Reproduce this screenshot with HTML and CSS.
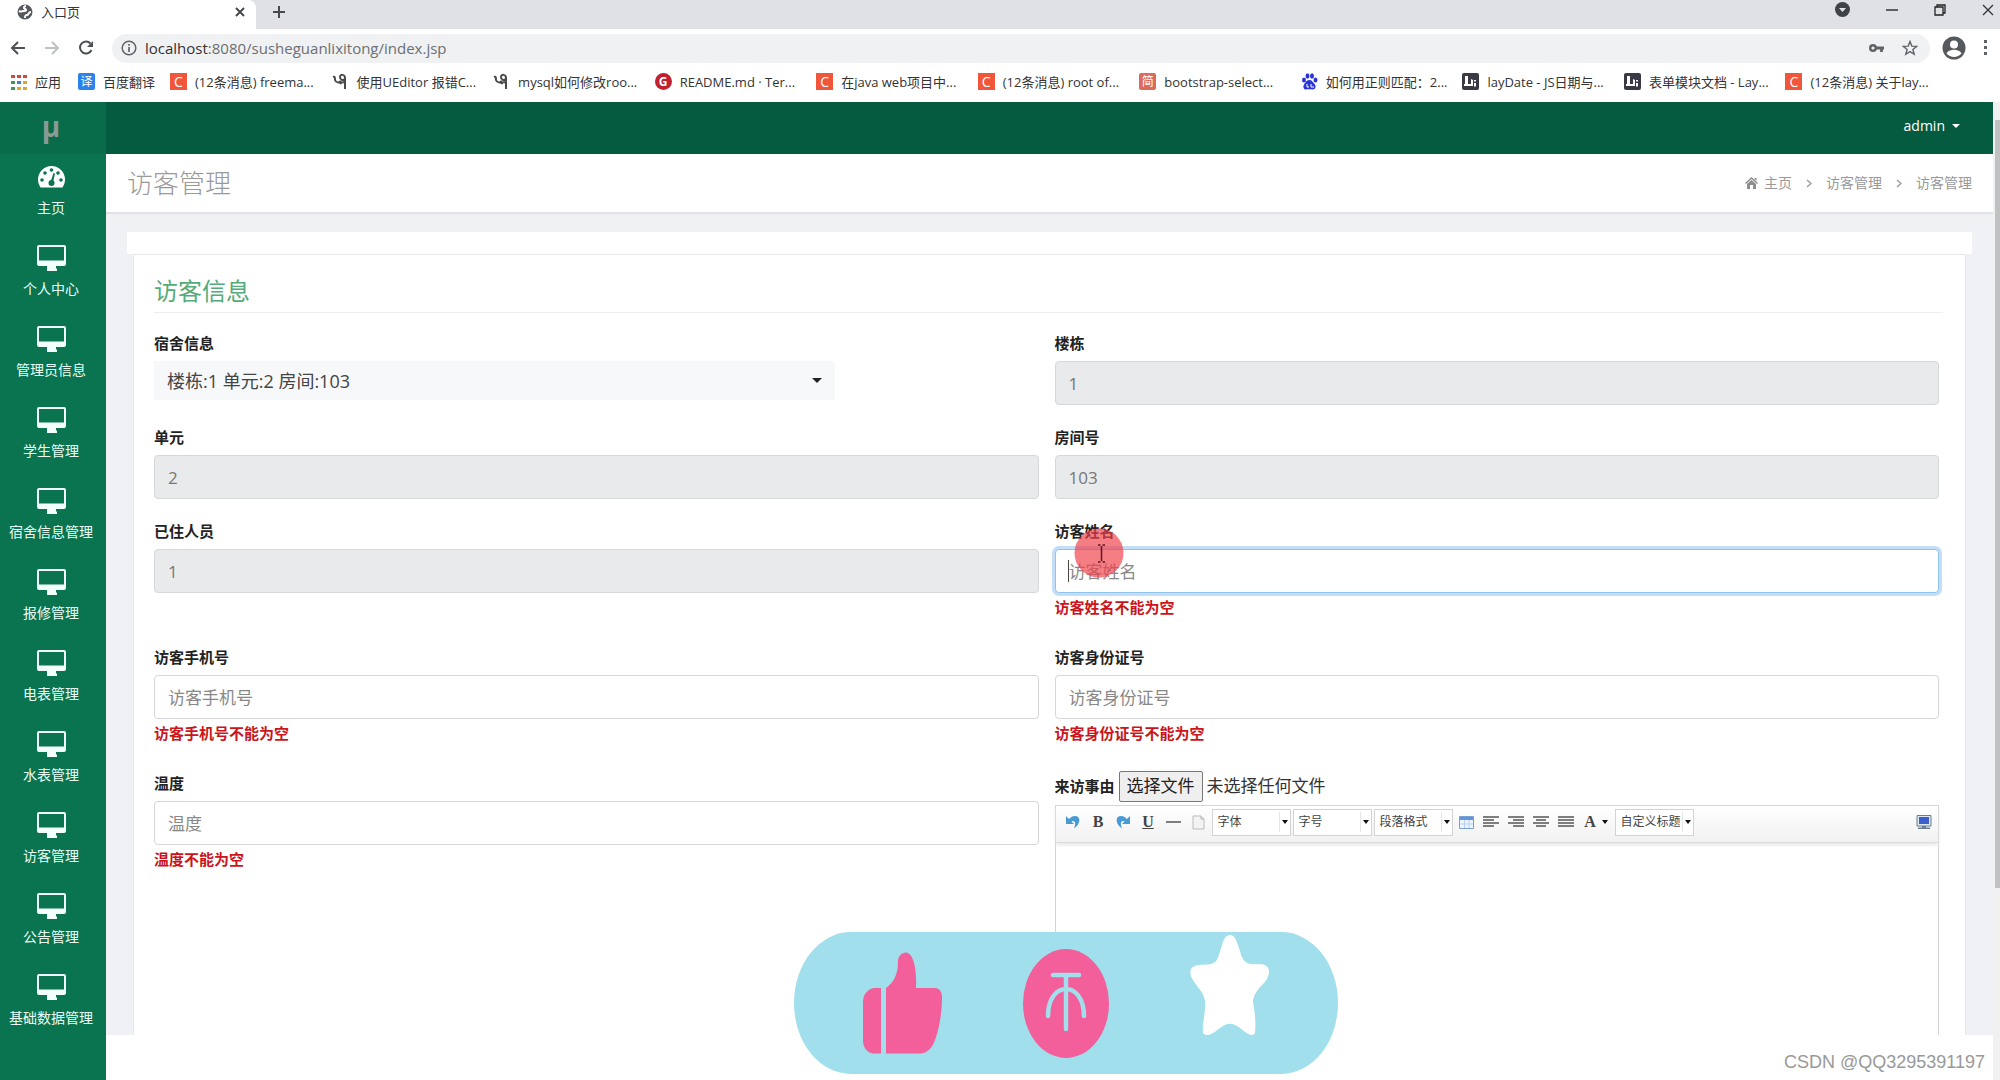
FILE: index.html
```html
<!DOCTYPE html>
<html lang="zh-CN">
<head>
<meta charset="utf-8">
<meta name="viewport" content="width=device-width, initial-scale=1">
<title>入口页</title>
<link rel="stylesheet" href="styles.css">
</head>
<body>
<svg class="sprite" aria-hidden="true">
  <symbol id="monitor" viewBox="0 0 29 26"><path fill-rule="evenodd" d="M2 0h25a2 2 0 0 1 2 2v17a2 2 0 0 1-2 2h-8v2.500h1V26H10v-2.500h0V21H2a2 2 0 0 1-2-2V2a2 2 0 0 1 2-2zM2 2v13.500h25V2z"/></symbol>
  <symbol id="lay" viewBox="0 0 17 17"><rect width="17" height="17" rx="2" fill="#3a3a46"/><path d="M3 3h3v8h3v-5l2 1v6H2v-2h1z" fill="#fff"/><path d="M12 7h2v1.500h-2zM12 10h2v3.500h-2z" fill="#fff"/></symbol>
  <symbol id="script" viewBox="0 0 17 17"><path d="M1 4c2-1 2 1 2 3 1 3 4 3 6 1M13 16V5c0-4-5-4-5-1s3 4 5 2M8 11c1-2 3-2 5-2" fill="none" stroke="#4a4a4a" stroke-width="2"/></symbol>
</svg>

<div class="chrome">
  <div class="tabstrip">
    <div class="tab">
      <svg width="16" height="16" viewBox="0 0 16 16"><circle cx="8" cy="8" r="7.500" fill="#55595d"/><path d="M9 2c-2 0-3 2-1 3s1 2-1 2-3 1-5 0M8 14c0-2 0-3 2-3s1-3 4-3" fill="none" stroke="#fff" stroke-width="2"/></svg>
      <span>入口页</span>
      <button class="plain tab-close" aria-label="关闭"><svg width="10" height="10" viewBox="0 0 10 10"><path d="M1 1l8 8M9 1l-8 8" stroke="#45484c" stroke-width="2"/></svg></button>
    </div>
    <button class="plain new-tab" aria-label="新标签页"><svg width="14" height="14" viewBox="0 0 14 14"><path d="M7 1v12M1 7h12" stroke="#45484c" stroke-width="2"/></svg></button>
    <div class="window-controls">
      <svg width="15" height="15" viewBox="0 0 15 15"><circle cx="7.500" cy="7.500" r="7.500" fill="#3f4246"/><path d="M4 6h7l-3.500 4z" fill="#e4e6e9"/></svg>
      <svg width="12" height="12" viewBox="0 0 12 12"><path d="M0 6h12" stroke="#333" stroke-width="1.500"/></svg>
      <svg width="12" height="12" viewBox="0 0 12 12"><path d="M1 3h8v8H1zM3 3V1h8v8H9" fill="none" stroke="#222" stroke-width="1.300"/></svg>
      <svg width="12" height="12" viewBox="0 0 12 12"><path d="M1 1l10 10M11 1L1 11" stroke="#333" stroke-width="1.300"/></svg>
    </div>
  </div>
  <div class="toolbar">
    <svg width="16" height="14" viewBox="0 0 16 14"><path d="M15 7H2M8 1L2 7l6 6" fill="none" stroke="#4d5155" stroke-width="2"/></svg>
    <svg width="16" height="14" viewBox="0 0 16 14"><path d="M1 7h13M8 1l6 6-6 6" fill="none" stroke="#bdc0c4" stroke-width="2"/></svg>
    <svg width="16" height="16" viewBox="0 0 16 16"><path d="M13.500 10a6 6 0 1 1-1-6.500" fill="none" stroke="#4d5155" stroke-width="2"/><path d="M15 1v6H9z" fill="#4d5155"/></svg>
    <div class="address">
      <svg width="16" height="16" viewBox="0 0 16 16"><circle cx="8" cy="8" r="6.800" fill="none" stroke="#5f6368" stroke-width="1.500"/><path d="M8 7v5M8 4v1.700" stroke="#5f6368" stroke-width="1.700"/></svg>
      <span class="url"><b>localhost</b>:8080/susheguanlixitong/index.jsp</span>
      <svg width="15" height="10" viewBox="0 0 15 10"><circle cx="4" cy="5" r="2.800" fill="none" stroke="#5f6368" stroke-width="2.400"/><path d="M7 5h8M12.500 5v4" stroke="#5f6368" stroke-width="2.800"/></svg>
      <svg width="16" height="16" viewBox="0 0 16 16"><path d="M8 1.500l1.800 4.600 4.900.3-3.800 3.100 1.300 4.800L8 11.600l-4.200 2.700 1.300-4.800-3.800-3.100 4.900-.3z" fill="none" stroke="#5f6368" stroke-width="1.400"/></svg>
    </div>
    <svg width="24" height="24" viewBox="0 0 24 24"><circle cx="12" cy="12" r="11.500" fill="#55595d"/><circle cx="12" cy="8.500" r="4" fill="#fff"/><path d="M4.500 17.500c2-5 13-5 15 0-4 4.500-11 4.500-15 0z" fill="#fff"/></svg>
    <svg width="4" height="16" viewBox="0 0 4 16"><path d="M0 0h3v3H0zM0 6h3v3H0zM0 12h3v3H0z" fill="#5f6368"/></svg>
  </div>
  <nav class="bookmarks">
    <a class="apps" href="#"><svg width="16" height="16" viewBox="0 0 16 16"><path d="M0 1h4v3H0zM6 1h4v3H6zM12 1h4v3h-4z" fill="#d8453e"/><path d="M0 7h4v3H0z" fill="#3c9a55"/><path d="M6 7h4v3H6z" fill="#3f7fd8"/><path d="M12 7h4v3h-4zM12 13h4v3h-4zM6 13h4v3H6z" fill="#dfa62c"/><path d="M0 13h4v3H0z" fill="#3c9a55"/></svg>应用</a>
    <a class="translate" href="#"><i class="fav fav-blue">译</i>百度翻译</a>
    <a href="#"><i class="fav fav-c">C</i>(12条消息) freema...</a>
    <a href="#"><svg width="17" height="17"><use href="#script"/></svg>使用UEditor 报错C...</a>
    <a href="#"><svg width="17" height="17"><use href="#script"/></svg>mysql如何修改roo...</a>
    <a href="#"><i class="fav fav-g">G</i>README.md · Ter...</a>
    <a href="#"><i class="fav fav-c">C</i>在java web项目中...</a>
    <a href="#"><i class="fav fav-c">C</i>(12条消息) root of...</a>
    <a href="#"><i class="fav fav-j">简</i>bootstrap-select...</a>
    <a href="#"><svg width="17" height="17" viewBox="0 0 17 17"><g fill="#2c36d6"><ellipse cx="3" cy="7" rx="2" ry="2.600"/><ellipse cx="6.500" cy="3" rx="2" ry="2.700"/><ellipse cx="11" cy="3" rx="2" ry="2.700"/><ellipse cx="14.500" cy="7" rx="2" ry="2.600"/><path d="M8.500 7c2.500 0 3 2 5 4s1 5.500-1.500 5.500-5-.5-7 0S1.500 14 3 11.500 6 7 8.500 7z"/></g><path d="M6 11v3h2M10 11v3h3" stroke="#fff" fill="none"/></svg>如何用正则匹配：2...</a>
    <a href="#"><svg width="17" height="17"><use href="#lay"/></svg>layDate - JS日期与...</a>
    <a href="#"><svg width="17" height="17"><use href="#lay"/></svg>表单模块文档 - Lay...</a>
    <a href="#"><i class="fav fav-c">C</i>(12条消息) 关于lay...</a>
  </nav>
</div>

<div class="app">
  <aside class="sidebar">
    <div class="logo">μ</div>
    <nav class="menu">
      <a href="#"><svg width="27" height="26" viewBox="0 0 27 26"><path fill="#fff" d="M13.500 2A13.500 13.500 0 0 1 27 15.500c0 3-1 5.500-2.500 8h-22C1 21 0 18.500 0 15.500A13.500 13.500 0 0 1 13.500 2z"/><g fill="#0a7350"><circle cx="13.500" cy="6" r="1.800"/><circle cx="7" cy="9" r="1.800"/><circle cx="20" cy="9" r="1.800"/><circle cx="4" cy="16" r="1.800"/><circle cx="23" cy="16" r="1.800"/><circle cx="13.500" cy="19" r="3"/><path d="M12.500 18l3-9 1.500.5-2 9z"/></g></svg>主页</a>
      <a href="#"><svg width="29" height="26"><use href="#monitor"/></svg>个人中心</a>
      <a href="#"><svg width="29" height="26"><use href="#monitor"/></svg>管理员信息</a>
      <a href="#"><svg width="29" height="26"><use href="#monitor"/></svg>学生管理</a>
      <a href="#"><svg width="29" height="26"><use href="#monitor"/></svg>宿舍信息管理</a>
      <a href="#"><svg width="29" height="26"><use href="#monitor"/></svg>报修管理</a>
      <a href="#"><svg width="29" height="26"><use href="#monitor"/></svg>电表管理</a>
      <a href="#"><svg width="29" height="26"><use href="#monitor"/></svg>水表管理</a>
      <a href="#"><svg width="29" height="26"><use href="#monitor"/></svg>访客管理</a>
      <a href="#"><svg width="29" height="26"><use href="#monitor"/></svg>公告管理</a>
      <a href="#"><svg width="29" height="26"><use href="#monitor"/></svg>基础数据管理</a>
    </nav>
  </aside>

  <main class="main">
    <header class="topbar"><button class="plain user">admin<i class="caret"></i></button></header>
    <div class="page-head">
      <h1>访客管理</h1>
      <nav class="crumbs">
        <a href="#"><svg width="13" height="12" viewBox="0 0 13 12"><path d="M6.500 0L13 6l-1 1-5.500-5L1 7 0 6zM9.500 1h2v3l-2-2zM2 7l4.500-4L11 7v5H8V8H5v4H2z" fill="#8c8f8e"/></svg>主页</a>
        <svg width="6" height="9" viewBox="0 0 6 9"><path d="M1 1l4 3.500L1 8" fill="none" stroke="#999" stroke-width="1.300"/></svg>
        <a href="#">访客管理</a>
        <svg width="6" height="9" viewBox="0 0 6 9"><path d="M1 1l4 3.500L1 8" fill="none" stroke="#999" stroke-width="1.300"/></svg>
        <span>访客管理</span>
      </nav>
    </div>
    <div class="content">
      <div class="strip"></div>
      <form class="card">
        <h2>访客信息</h2>
        <div class="fields">
          <div class="field"><label for="room">宿舍信息</label>
            <div class="picker"><select id="room"><option>楼栋:1 单元:2 房间:103</option></select><i class="caret"></i></div></div>
          <div class="field"><label for="building">楼栋</label><input id="building" type="text" value="1" readonly></div>
          <div class="field"><label for="unit">单元</label><input id="unit" type="text" value="2" readonly></div>
          <div class="field"><label for="number">房间号</label><input id="number" type="text" value="103" readonly></div>
          <div class="field"><label for="people">已住人员</label><input id="people" type="text" value="1" readonly></div>
          <div class="field pointed"><label for="name">访客姓名</label><input id="name" class="focused" type="text" placeholder="访客姓名"><p class="error">访客姓名不能为空</p>
            <svg class="pointer" width="50" height="50" viewBox="0 0 50 50"><circle cx="25" cy="25" r="24.500" fill="#f0404a" fill-opacity=".68"/><path d="M24 17h2.500M28.500 17H31M27.500 18v15M24 34h2.500M28.500 34H31" stroke="#5b1a1e" stroke-width="1.500"/></svg></div>
          <div class="field"><label for="phone">访客手机号</label><input id="phone" type="text" placeholder="访客手机号"><p class="error">访客手机号不能为空</p></div>
          <div class="field"><label for="idcard">访客身份证号</label><input id="idcard" type="text" placeholder="访客身份证号"><p class="error">访客身份证号不能为空</p></div>
          <div class="field"><label for="temp">温度</label><input id="temp" type="text" placeholder="温度"><p class="error">温度不能为空</p></div>
          <div class="field reason">
            <div class="file-row"><label for="reason">来访事由</label><button type="button" class="file">选择文件</button><span>未选择任何文件</span></div>
            <div class="editor">
              <div class="tools">
                <button type="button" class="plain tool" aria-label="撤销"><svg width="14" height="14" viewBox="0 0 14 14"><path d="M0 1v8h8L5.500 6.500c3-1.500 5 1 2.500 7C15 9 15 1 9 1 6 1 4.500 2.500 3 4z" fill="#4a9ad4"/></svg></button>
                <button type="button" class="plain tool glyph">B</button>
                <button type="button" class="plain tool" aria-label="重做"><svg width="14" height="14" viewBox="0 0 14 14"><path d="M14 1v8H6l2.500-2.500c-3-1.500-5 1-2.500 7C-1 9-1 1 5 1c3 0 4.500 1.500 6 3z" fill="#4a9ad4"/></svg></button>
                <button type="button" class="plain tool glyph under">U</button>
                <button type="button" class="plain tool" aria-label="分隔线"><svg width="15" height="14" viewBox="0 0 15 14"><path d="M0 7h15" stroke="#555" stroke-width="1.500"/></svg></button>
                <button type="button" class="plain tool" aria-label="清空"><svg width="13" height="15" viewBox="0 0 13 15"><path d="M1 1h8l3 3v10H1z" fill="#f3f3f3" stroke="#bbb"/><path d="M9 1v3h3" fill="none" stroke="#bbb"/></svg></button>
                <button type="button" class="combo"><span>字体</span><i class="tiny"></i></button>
                <button type="button" class="combo"><span>字号</span><i class="tiny"></i></button>
                <button type="button" class="combo"><span>段落格式</span><i class="tiny"></i></button>
                <button type="button" class="plain tool" aria-label="表格"><svg width="15" height="13" viewBox="0 0 15 13"><path d="M.5.500h14v12H.5z" fill="#edf4ff" stroke="#7a9fd6"/><path d="M1 1h13v3H1z" fill="#6593da"/><path d="M5.500 4v8M10 4v8M1 8h13" stroke="#b9cfee"/></svg></button>
                <button type="button" class="plain tool" aria-label="左对齐"><svg width="16" height="13" viewBox="0 0 16 13"><path d="M0 1h16M0 4h11M0 7h16M0 10h11" stroke="#555" stroke-width="1.500"/></svg></button>
                <button type="button" class="plain tool" aria-label="右对齐"><svg width="16" height="13" viewBox="0 0 16 13"><path d="M0 1h16M5 4h11M0 7h16M5 10h11" stroke="#555" stroke-width="1.500"/></svg></button>
                <button type="button" class="plain tool" aria-label="居中"><svg width="16" height="13" viewBox="0 0 16 13"><path d="M0 1h16M3 4h10M0 7h16M3 10h10" stroke="#555" stroke-width="1.500"/></svg></button>
                <button type="button" class="plain tool" aria-label="两端对齐"><svg width="16" height="13" viewBox="0 0 16 13"><path d="M0 1h16M0 4h16M0 7h16M0 10h16" stroke="#555" stroke-width="1.500"/></svg></button>
                <button type="button" class="plain tool glyph color">A<i class="tiny"></i></button>
                <button type="button" class="combo"><span>自定义标题</span><i class="tiny"></i></button>
                <button type="button" class="plain tool screen" aria-label="全屏"><svg width="16" height="14" viewBox="0 0 16 14"><path d="M1 .5h14v10.500H1z" fill="#dfe6ee" stroke="#6a7f94"/><path d="M3 2h10v7H3z" fill="#3b5fd0"/><path d="M6 11h4v1.500H6zM2 12.500h12V14H2z" fill="#6a7f94"/></svg></button>
              </div>
              <textarea id="reason"></textarea>
            </div>
          </div>
        </div>
      </form>
    </div>
  </main>
  <div class="scrollbar"><div class="thumb"></div></div>
</div>

<svg class="badge" width="544" height="142" viewBox="0 0 544 142">
  <rect width="544" height="142" rx="57" ry="71" fill="#a0dfeb"/>
  <g fill="#f25f9a">
    <path d="M87 56V121.500H79C74 121 69 116 69 109V70C69 62 74 57 80 56z"/>
    <path d="M92 56C99 51 103 44 104 33C103 25 107 20.500 112 20.500C119 21 123 35 122 56H142C146 57 148 60 148 65C148 82 145 97 141 108C138 117 132 121.500 126 121.500H92z"/>
    <ellipse cx="272" cy="71.500" rx="43" ry="54.500"/>
  </g>
  <path d="M259 43h26M272 43v54M254 84c0-36 36-36 36 0" fill="none" stroke="#a0dfeb" stroke-width="4.500" stroke-linecap="round"/>
  <path d="M436 3C443 3 444 16 449 27C454 35 464 31 471 33C477 36 476 44 470 51C464 57 459 63 459 70C461 80 462 91 461 101C457 107 450 98 443 94C438 91 434 91 429 94C422 98 415 107 409 101C408 91 412 80 411 69C410 60 402 54 399 48C394 41 396 34 404 33C411 32 418 34 423 28C428 18 428 3 436 3z" fill="#fff"/>
</svg>
<div class="watermark">CSDN @QQ3295391197</div>
</body>
</html>
```

FILE: styles.css
```css
* { box-sizing: border-box; }

body {
  margin: 0;
  min-height: 100vh;
  display: flex;
  flex-direction: column;
  position: relative;
  font: 14px/20px "Open Sans", "Noto Sans CJK SC", sans-serif;
  color: #333;
  background: #fff;
}

a { color: inherit; text-decoration: none; }
svg { flex: none; display: block; }
i { font-style: normal; }
h1, h2, p { margin: 0; font-weight: 400; }
.sprite { position: absolute; width: 0; height: 0; }

.plain {
  display: flex;
  align-items: center;
  justify-content: center;
  padding: 0;
  border: 0;
  background: none;
  font: inherit;
  color: inherit;
}

.caret {
  border: 5px solid transparent;
  border-top-color: currentColor;
  border-bottom: 0;
}

.tiny {
  flex: none;
  border: 3px solid transparent;
  border-top: 4px solid #111;
  border-bottom: 0;
}

/* browser frame */
.tabstrip { display: flex; height: 29px; background: #dfe1e5; }
.tab {
  display: flex;
  align-items: center;
  gap: 8px;
  width: 256px;
  padding: 0 11px 6px 17px;
  border-radius: 0 8px 0 0;
  background: #fff;
  font-size: 13px;
}
.tab-close { margin-left: auto; }
.new-tab { width: 46px; padding-bottom: 6px; }
.window-controls {
  display: flex;
  align-items: center;
  gap: 36px;
  margin-left: auto;
  padding: 0 6px 10px 0;
}
.toolbar {
  display: flex;
  align-items: center;
  gap: 18px;
  height: 38px;
  padding: 0 12px 0 10px;
}
.address {
  flex: 1;
  display: flex;
  align-items: center;
  gap: 18px;
  height: 29px;
  padding: 0 12px 0 9px;
  border-radius: 15px;
  background: #f0f1f3;
}
.toolbar .address { margin-right: -6px; }
.url { flex: 1; margin-left: -10px; font-size: 15px; color: #6b6f73; }
.url b { font-weight: 400; color: #333; }
.bookmarks {
  display: flex;
  align-items: center;
  height: 35px;
  padding: 0 53px 6px 11px;
  font-size: 13px;
  white-space: nowrap;
}
.bookmarks a { flex: 1 1 0; min-width: 0; display: flex; align-items: center; gap: 8px; }
.bookmarks .apps { flex: 0 0 67px; }
.bookmarks .translate { flex: 0 0 92px; }
.fav {
  flex: none;
  width: 17px;
  height: 17px;
  color: #fff;
  font-size: 14px;
  line-height: 17px;
  text-align: center;
}
.fav-blue { border-radius: 2px; background: #2b83ea; font-size: 12px; }
.fav-c { background: #f0563a; }
.fav-g { border-radius: 50%; background: #c0202f; font-weight: 700; font-size: 12px; }
.fav-j { border-radius: 2px; background: #dd6b5c; font-size: 12px; }

/* application */
.app { flex: 1; display: flex; }
.sidebar { flex: none; width: 106px; background: #0a7350; color: #e9fff6; }
.logo {
  height: 52px;
  padding-right: 4px;
  background: #086b4a;
  color: #8d9a94;
  font-size: 28px;
  font-weight: 700;
  line-height: 48px;
  text-align: center;
}
.menu a {
  display: flex;
  flex-direction: column;
  align-items: center;
  gap: 8px;
  height: 81px;
  padding: 10px 4px 0 0;
  white-space: nowrap;
}
.menu svg { fill: #f2fffb; }

.main { flex: 1; min-width: 0; display: flex; flex-direction: column; }
.topbar {
  display: flex;
  justify-content: flex-end;
  height: 52px;
  padding: 0 33px 4px 0;
  background: #055b3f;
  color: #fff;
}
.user { gap: 7px; }
.user .caret { border-width: 4px 4px 0; }
.page-head {
  display: flex;
  align-items: center;
  justify-content: space-between;
  height: 60px;
  padding: 0 21px;
  border-bottom: 2px solid #dfe2e6;
}
h1 { font-size: 26px; line-height: 36px; color: #999; font-weight: 300; }
.crumbs { display: flex; align-items: center; gap: 14px; color: #999; }
.crumbs a { display: flex; align-items: center; gap: 6px; }

.content {
  flex: 1;
  display: flex;
  flex-direction: column;
  margin-bottom: 45px;
  padding: 18px 21px 0;
  background: #f0f1f4;
}
.strip { height: 22px; background: #fff; }
.card {
  flex: 1;
  display: flex;
  flex-direction: column;
  margin: 0 6px;
  padding: 18px 22px 0 20px;
  border: 1px solid #e6e8ea;
  border-bottom: 0;
  background: #fff;
}
h2 {
  padding-bottom: 3px;
  border-bottom: 1px solid #eceeef;
  font-size: 24px;
  line-height: 36px;
  color: #55ab79;
}
.fields {
  flex: 1;
  display: grid;
  grid-template-columns: 1fr 1fr;
  grid-template-rows: auto auto auto auto 1fr;
  gap: 20px 16px;
  padding: 18px 4px 0 0;
}
.field { display: flex; flex-direction: column; min-width: 0; }
.field label {
  margin-bottom: 6px;
  font-size: 15px;
  font-weight: 700;
  line-height: 24px;
  color: #222;
}
.field input {
  width: 100%;
  height: 44px;
  padding: 0 13px;
  border: 1px solid #d5d7d9;
  border-radius: 4px;
  background: #fff;
  font: inherit;
  font-size: 17px;
  color: #777;
}
.field input::placeholder { color: #888; opacity: 1; }
.field input[readonly] { background: #e9eaec; }
.field .focused {
  border-color: #8fc3f0;
  background: linear-gradient(#444, #444) 12px center / 1px 22px no-repeat #fff;
  box-shadow: 0 0 0 3px #c3def6;
}
.error {
  margin: 2px 0 6px;
  font-size: 15px;
  font-weight: 700;
  line-height: 24px;
  color: #c9151b;
}
.picker {
  display: flex;
  align-items: center;
  width: 77%;
  height: 39px;
  padding-right: 13px;
  background: #f7f8fa;
  color: #222;
}
.picker select {
  flex: 1;
  height: 39px;
  padding: 0 13px;
  border: 0;
  appearance: none;
  background: none;
  font: inherit;
  font-size: 18px;
  color: #444;
}
.pointed { position: relative; }
.pointer { position: absolute; left: 19px; top: 9px; }

.file-row { display: flex; align-items: center; gap: 4px; height: 34px; padding-bottom: 4px; font-size: 17px; }
.file-row label { margin: 0; }
.file {
  height: 31px;
  padding: 0 7px;
  border: 1px solid #777;
  border-radius: 2px;
  background: #efefef;
  font: inherit;
  color: #222;
}
.editor { flex: 1; display: flex; flex-direction: column; border: 1px solid #d4d4d4; border-bottom: 0; }
.tools {
  display: flex;
  align-items: center;
  height: 37px;
  padding: 0 2px 4px 5px;
  border-bottom: 1px solid #ddd;
  background: linear-gradient(#fff, #f1f1f1);
  box-shadow: 0 2px 4px #e4e4e4;
}
.tool { flex: none; width: 25px; height: 25px; }
.glyph { font: 700 16px/20px "Liberation Serif", serif; color: #444; }
.under { text-decoration: underline; }
.color { width: 35px; gap: 6px; }
.combo {
  flex: none;
  display: flex;
  align-items: center;
  justify-content: space-between;
  width: 79px;
  height: 27px;
  margin: 0 1px;
  padding: 0 2px 0 5px;
  border: 1px solid #d3d3d3;
  background: #fff;
  font: inherit;
  font-size: 12px;
  color: #444;
  white-space: nowrap;
}
.combo span { flex: 1; margin-right: 2px; border-right: 1px solid #e6e6e6; text-align: left; }
.screen { margin-left: auto; }
.editor textarea {
  flex: 1;
  width: 100%;
  padding: 8px;
  margin-top: 4px;
  border: 0;
  resize: none;
  background: #fff;
}

.scrollbar { flex: none; width: 7px; padding: 18px 0 0 2px; background: #f1f1f1; }
.thumb { height: 80%; background: #c0c1c3; }

/* floating layers */
.badge { position: absolute; left: 50%; margin-left: -206px; bottom: 6px; }
.watermark { position: absolute; right: 15px; bottom: 6px; font: 18px/24px "Liberation Sans", sans-serif; color: #999; }
```
